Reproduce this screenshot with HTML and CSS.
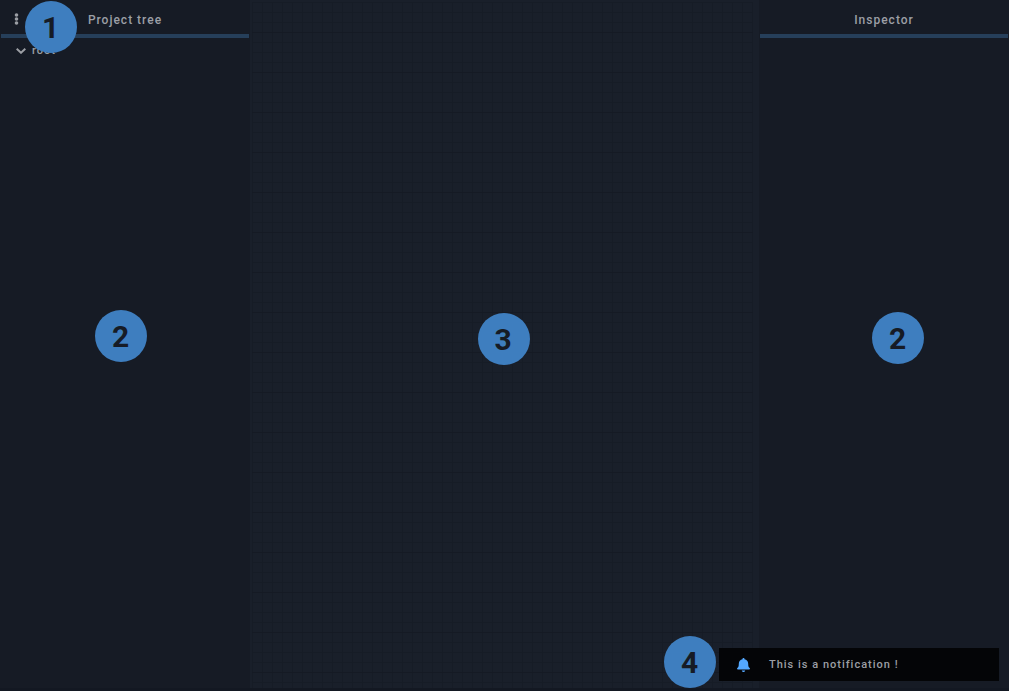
FILE: index.html
```
<!DOCTYPE html>
<html lang="en">
<head>
<meta charset="utf-8">
<meta name="viewport" content="width=device-width, initial-scale=1">
<title>Project editor</title>
<link rel="stylesheet" href="styles.css">
</head>
<body>
<div class="editor">
  <aside class="panel">
    <header class="panel-header">
      <button class="menu-button" type="button" aria-label="Menu">
        <svg width="5" height="12" viewBox="0 0 5 12" fill="currentColor"><circle cx="2.5" cy="2" r="1.8"/><circle cx="2.5" cy="6" r="1.8"/><circle cx="2.5" cy="10" r="1.8"/></svg>
      </button>
      <h2 class="panel-title">Project tree</h2>
      <span class="badge badge-menu">1</span>
    </header>
    <button class="tree-item" type="button">
      <svg width="10" height="6" viewBox="0 0 10 6" fill="none" stroke="currentColor" stroke-width="1.9"><path d="M.7.7 5 4.8 9.3.7"/></svg>
      <span>root</span>
    </button>
    <span class="badge badge-tree">2</span>
  </aside>
  <main class="canvas">
    <div class="grid"></div>
    <span class="badge badge-canvas">3</span>
  </main>
  <aside class="panel">
    <header class="panel-header">
      <h2 class="panel-title">Inspector</h2>
    </header>
    <span class="badge badge-inspector">2</span>
  </aside>
  <div class="notification" role="status">
    <svg class="bell" width="13" height="14" viewBox="0 0 13 14" fill="currentColor"><path d="M6.5 0c.6 0 1 .4 1 1v.3c2.2.5 3.7 2.2 3.7 4.4 0 2.300.3 3.300 1.400 4.400.7.7.3 1.400-.5 1.400H.9c-.8 0-1.200-.7-.5-1.400C1.500 9 1.800 8 1.800 5.700c0-2.200 1.500-3.900 3.700-4.400V1c0-.6.4-1 1-1zM4.800 12.400h3.400c-.1.900-.8 1.500-1.700 1.500s-1.600-.6-1.700-1.500z"/></svg>
    <span>This is a notification !</span>
    <span class="badge badge-notification">4</span>
  </div>
</div>
</body>
</html>
```
FILE: styles.css
```
* {
  box-sizing: border-box;
}

body {
  margin: 0;
  background: #161b25;
  color: #9c9fa5;
  font-family: Roboto, "Liberation Sans", sans-serif;
  font-size: 12px;
  font-weight: 500;
  letter-spacing: 1px;
}

button {
  border: 0;
  padding: 0;
  background: none;
  color: inherit;
  font: inherit;
  letter-spacing: inherit;
}

.editor {
  position: relative;
  display: grid;
  grid-template-columns: 250px 1fr 250px;
  min-height: 100vh;
  border-bottom: 3px solid #131822;
}

.panel {
  position: relative;
  padding: 0 1px;
}

.panel-header {
  position: relative;
  display: flex;
  align-items: center;
  justify-content: center;
  height: 38px;
  padding-top: 5px;
  border-bottom: 4px solid #263f5a;
}

.panel-title {
  margin: 0;
  font-size: 12px;
  font-weight: 500;
}

.menu-button {
  position: absolute;
  left: 13px;
  top: 13px;
  display: flex;
}

.tree-item {
  display: flex;
  align-items: center;
  gap: 6px;
  height: 25px;
  padding-left: 15px;
  font-size: 11px;
}

.canvas {
  position: relative;
  display: flex;
  padding: 2px 6px 0 2px;
  background: #191f2a;
}

.grid {
  flex: 1;
  background:
    repeating-linear-gradient(#0000 0 30px, #151a24 30px 31px, #0000 31px 40px),
    repeating-linear-gradient(#161c26 0 1px, #0000 1px 10px),
    repeating-linear-gradient(90deg, #161c26 0 1px, #0000 1px 10px);
}

.badge {
  position: absolute;
  display: flex;
  align-items: center;
  justify-content: center;
  width: 52px;
  height: 52px;
  padding-right: 1px;
  border-radius: 50%;
  background: #3e7ebf;
  color: #161b25;
  font-size: 30px;
  font-weight: 700;
  letter-spacing: 0;
}

.badge-menu {
  left: 24px;
  top: 1px;
}

.badge-tree {
  left: 95px;
  top: 310px;
}

.badge-canvas {
  left: calc(50% - 27px);
  top: 313px;
}

.badge-inspector {
  right: 85px;
  top: 312px;
}

.notification {
  position: absolute;
  right: 10px;
  bottom: 7px;
  display: flex;
  align-items: center;
  gap: 19px;
  width: 280px;
  height: 33px;
  padding-left: 18px;
  background: #040507;
  font-size: 11px;
}

.bell {
  color: #54a8ff;
}

.badge-notification {
  left: -55px;
  top: -12px;
}
```
